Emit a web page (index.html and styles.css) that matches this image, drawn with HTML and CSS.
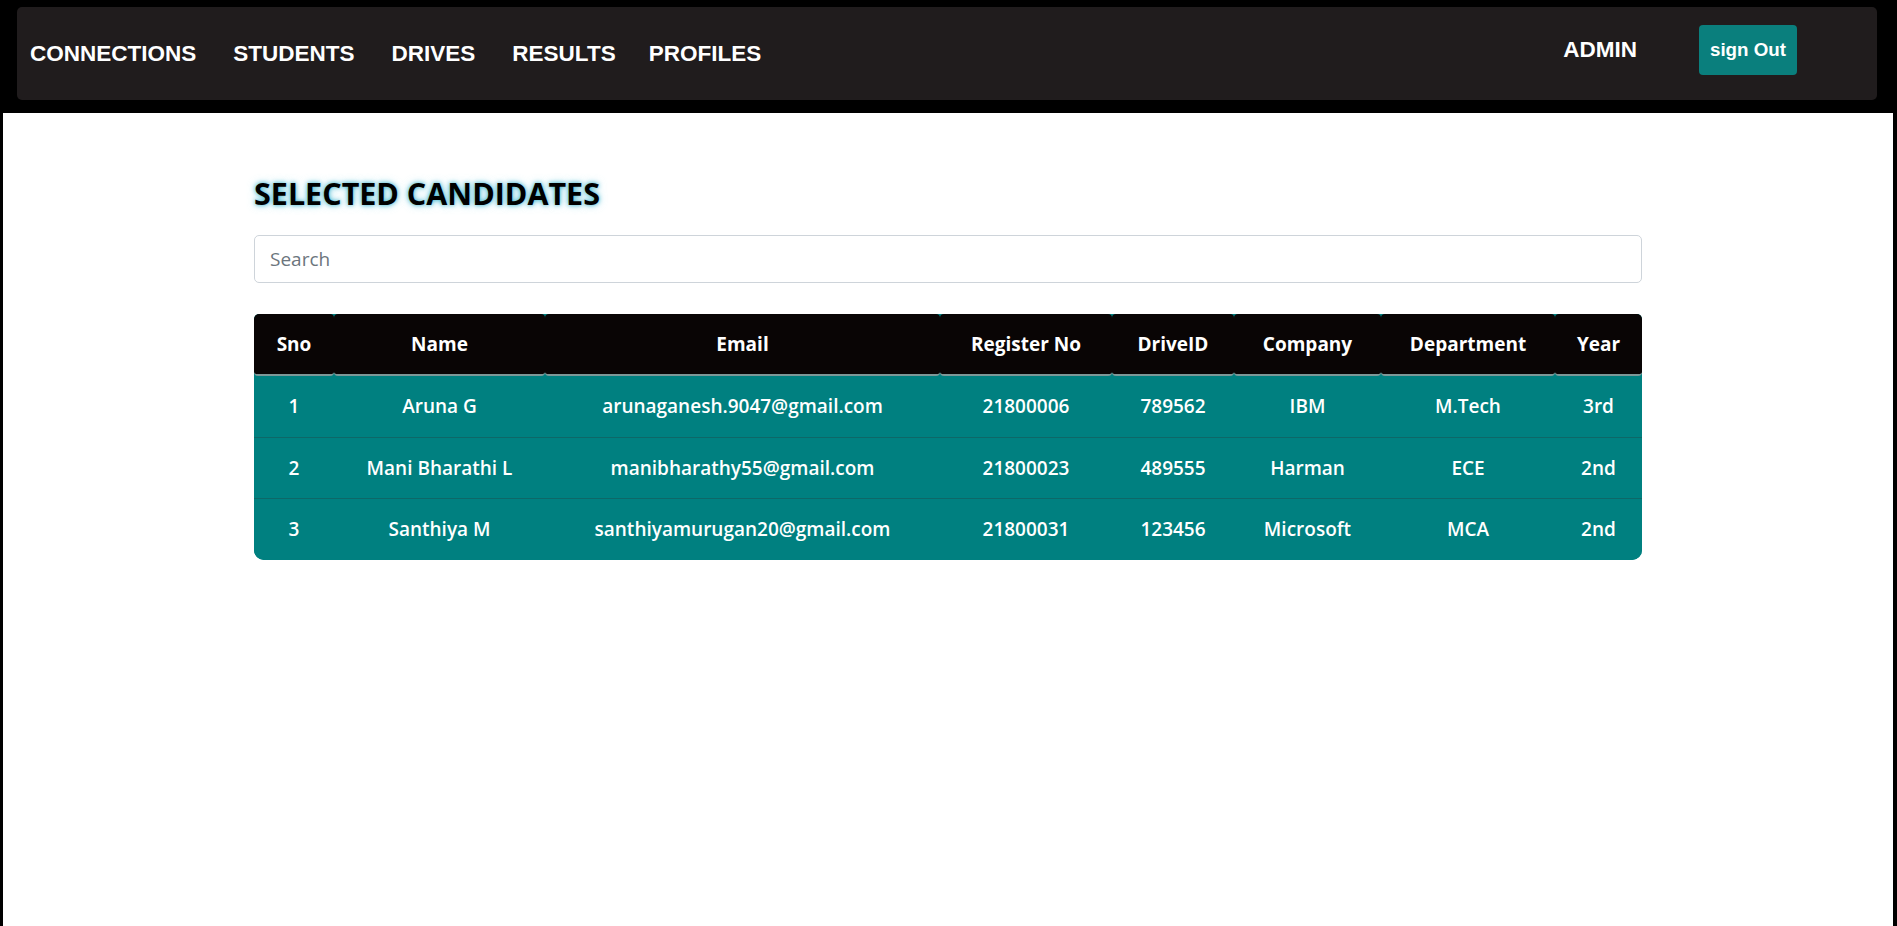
FILE: index.html
```html
<!DOCTYPE html>
<html lang="en">
<head>
<meta charset="utf-8">
<title>Selected Candidates</title>
<link rel="stylesheet" href="styles.css">
</head>
<body>
<header class="topbar">
  <nav class="navbar">
    <ul class="nav-links">
      <li><a href="#">CONNECTIONS</a></li>
      <li><a href="#">STUDENTS</a></li>
      <li><a href="#">DRIVES</a></li>
      <li><a href="#">RESULTS</a></li>
      <li class="last"><a href="#">PROFILES</a></li>
    </ul>
    <div class="nav-right">
      <span class="admin">ADMIN</span>
      <button class="signout" type="button">sign Out</button>
    </div>
  </nav>
</header>
<main class="page">
  <div class="container">
    <h3 class="title">SELECTED CANDIDATES</h3>
    <input class="search" type="text" placeholder="Search">
    <div class="table-wrap">
      <table class="results">
        <colgroup>
          <col class="c-sno"><col class="c-name"><col class="c-email"><col class="c-reg">
          <col class="c-drive"><col class="c-company"><col class="c-dept"><col class="c-year">
        </colgroup>
        <thead>
          <tr>
            <th>Sno</th><th>Name</th><th>Email</th><th>Register No</th>
            <th>DriveID</th><th>Company</th><th>Department</th><th>Year</th>
          </tr>
        </thead>
        <tbody>
          <tr>
            <td>1</td><td>Aruna G</td><td>arunaganesh.9047@gmail.com</td><td>21800006</td>
            <td>789562</td><td>IBM</td><td>M.Tech</td><td>3rd</td>
          </tr>
          <tr>
            <td>2</td><td>Mani Bharathi L</td><td>manibharathy55@gmail.com</td><td>21800023</td>
            <td>489555</td><td>Harman</td><td>ECE</td><td>2nd</td>
          </tr>
          <tr>
            <td>3</td><td>Santhiya M</td><td>santhiyamurugan20@gmail.com</td><td>21800031</td>
            <td>123456</td><td>Microsoft</td><td>MCA</td><td>2nd</td>
          </tr>
        </tbody>
      </table>
    </div>
  </div>
</main>
</body>
</html>
```

FILE: styles.css
```css
html, body {
  margin: 0;
  padding: 0;
}

body {
  background: #000;
  min-height: 926px;
  display: flex;
  flex-direction: column;
  font-family: "Open Sans", "Noto Sans", sans-serif;
}

.topbar {
  padding: 7px 20px 13px 17px;
}

.navbar {
  height: 93px;
  background: #201c1d;
  border-radius: 5px;
  display: flex;
  align-items: center;
  padding: 0 80px 0 13px;
  box-sizing: border-box;
}

.nav-links {
  display: flex;
  gap: 37px;
  list-style: none;
  margin: 0;
  padding: 0;
  flex: 1;
}

.nav-links .last {
  margin-left: -4px;
}

.nav-links a,
.admin {
  color: #fff;
  font: bold 22.5px "Liberation Sans", Arial, sans-serif;
  text-decoration: none;
}

.nav-right {
  display: flex;
  align-items: center;
  padding-bottom: 7px;
}

.admin {
  margin-right: 62px;
}

.signout {
  background: #0a7f7d;
  border: none;
  border-radius: 4px;
  color: #fff;
  font: bold 18.75px "Liberation Sans", Arial, sans-serif;
  height: 50px;
  width: 98px;
  padding: 0;
  cursor: pointer;
}

.page {
  flex: 1;
  background: #fff;
  margin: 0 4px 0 3px;
}

.container {
  width: 1388px;
  margin: 0 auto;
  padding-top: 62px;
}

.title {
  margin: 0 0 24px;
  font-size: 30.5px;
  line-height: 36px;
  font-weight: 700;
  color: #000;
  text-shadow: 0 0 4px rgba(40, 170, 200, 0.9), 0 0 8px rgba(120, 210, 230, 0.7);
}

.search {
  display: block;
  width: 100%;
  height: 48px;
  box-sizing: border-box;
  border: 1px solid #ced4da;
  border-radius: 5px;
  padding: 0 15px;
  font: 19px "Open Sans", "Noto Sans", sans-serif;
  color: #495057;
  outline: none;
}

.search::placeholder {
  color: #6c757d;
}

.table-wrap {
  margin-top: 31px;
  border-radius: 5px 5px 10px 10px;
  overflow: hidden;
  background: #008080;
}

.results {
  width: 1388px;
  table-layout: fixed;
  border-collapse: separate;
  border-spacing: 0;
  color: #fff;
  text-align: center;
  font-size: 19px;
}

.c-sno { width: 80px; }
.c-name { width: 211px; }
.c-email { width: 395px; }
.c-reg { width: 172px; }
.c-drive { width: 122px; }
.c-company { width: 147px; }
.c-dept { width: 174px; }
.c-year { width: 87px; }

.results th {
  background: #090505;
  font-weight: 700;
  padding: 15px 6px;
  line-height: 30px;
  border-radius: 4px;
  border-bottom: 2px solid #7d9898;
}

.results td {
  background: #008080;
  font-weight: 600;
  padding: 15px 6px;
  line-height: 30.5px;
}

.results tbody tr + tr td {
  border-top: 1px solid #0d6868;
}
```
